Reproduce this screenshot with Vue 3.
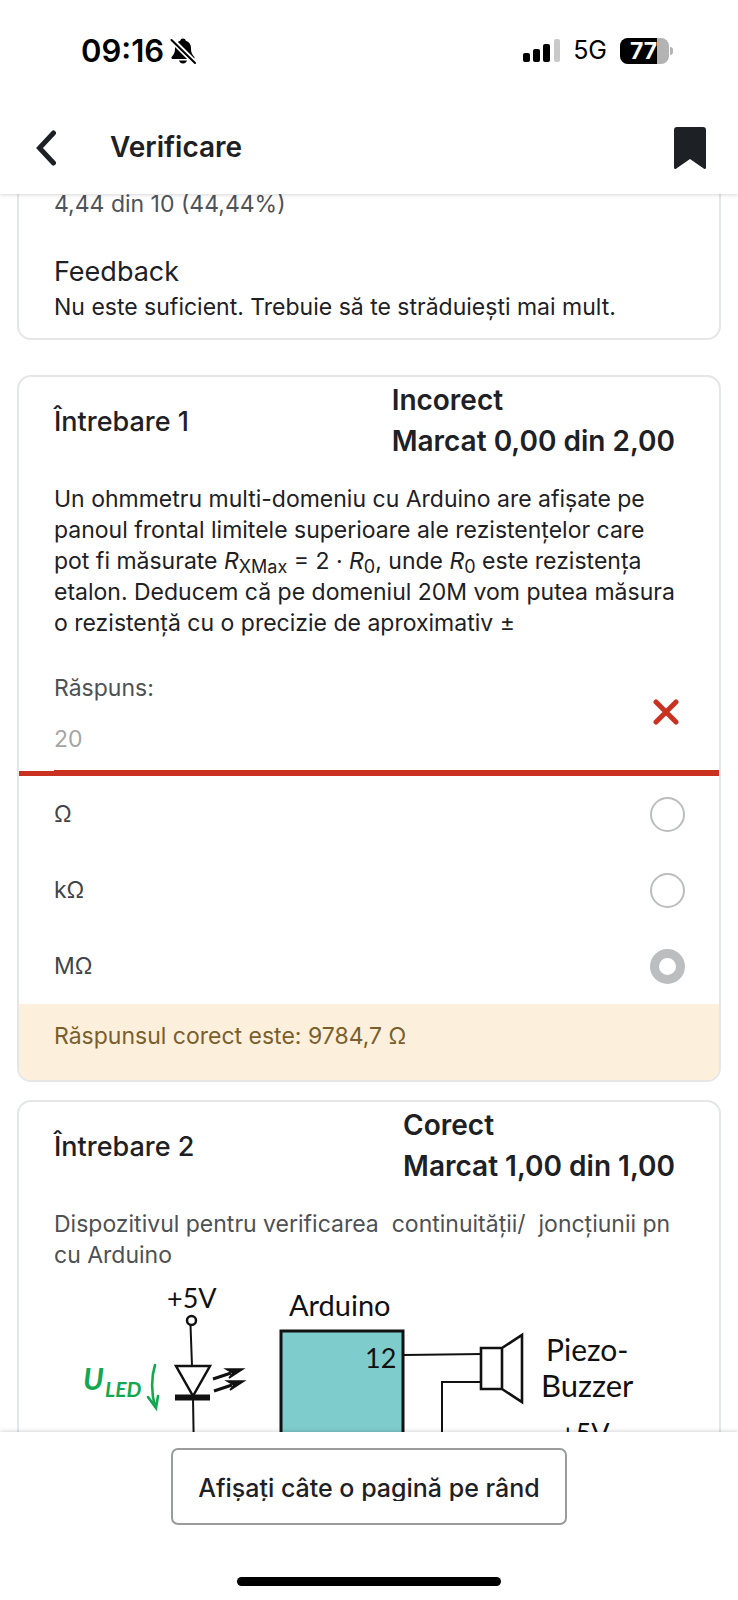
<script setup>
import { ref } from 'vue'

const units = [
  { value: 'ohm', label: 'Ω' },
  { value: 'kohm', label: 'kΩ' },
  { value: 'mohm', label: 'MΩ' },
]
const unit = ref('mohm')
const answer = ref('20')
</script>

<template>
  <div class="screen">
    <header class="top">
      <div class="status-bar">
        <div class="clock">
          <span class="time">09:16</span>
          <svg class="bell" viewBox="0 0 26 28" aria-hidden="true">
            <path d="M13 1.500c1.600 0 2.500.9 2.700 2.200 3.500 1 5.300 3.700 5.300 7.300 0 5 1.200 6.300 3.200 8.800.9 1.200.3 2.200-1 2.200H2.800c-1.300 0-1.900-1-1-2.200C3.800 17.300 5 16 5 11c0-3.600 1.800-6.300 5.300-7.300C10.500 2.400 11.400 1.500 13 1.500Z" />
            <path d="M9 23.500h8c-.6 1.800-2 3-4 3s-3.400-1.200-4-3Z" />
            <path d="M0 1 25 26" stroke="#fff" stroke-width="5.500" />
            <path d="M1.500 3 25 26" stroke="#000" stroke-width="2" stroke-linecap="round" />
          </svg>
        </div>
        <div class="signals">
          <svg class="bars" viewBox="0 0 38 24" aria-hidden="true">
            <rect x="0" y="14" width="7" height="9" rx="2" />
            <rect x="10" y="10" width="7" height="13" rx="2" />
            <rect x="20" y="5" width="7" height="18" rx="2" />
            <rect x="31" y="0" width="6" height="23" rx="2" fill="#c9c9c9" />
          </svg>
          <span class="network">5G</span>
          <span class="battery"><span class="level">77</span></span>
          <span class="battery-tip"></span>
        </div>
      </div>
      <div class="toolbar">
        <button class="icon-button" type="button" aria-label="Înapoi">
          <svg class="back" viewBox="0 0 20 36" aria-hidden="true">
            <path d="M17.500 3 3.500 18l14 15" fill="none" stroke="#1d2125" stroke-width="5" stroke-linecap="round" stroke-linejoin="miter" />
          </svg>
        </button>
        <h1>Verificare</h1>
        <button class="icon-button" type="button" aria-label="Marcaj">
          <svg class="bookmark" viewBox="0 0 32 42" aria-hidden="true">
            <path d="M3 0h26a3 3 0 0 1 3 3v37.500c0 1.300-1 1.900-2 1.200L16 32 2 41.700c-1 .7-2 .1-2-1.200V3a3 3 0 0 1 3-3Z" fill="#1d2125" />
          </svg>
        </button>
      </div>
    </header>

    <main>
      <section class="card summary">
        <p class="muted">4,44 din 10 (44,44%)</p>
        <h2>Feedback</h2>
        <p>Nu este suficient. Trebuie să te străduiești mai mult.</p>
      </section>

      <section class="card">
        <div class="question-head">
          <h2>Întrebare 1</h2>
          <div class="grade">
            <p>Incorect</p>
            <p>Marcat 0,00 din 2,00</p>
          </div>
        </div>
        <p class="inset">
          Un ohmmetru multi-domeniu cu Arduino are afișate pe panoul frontal limitele superioare ale
          rezistențelor care pot fi măsurate <i>R</i><sub>XMax</sub> = 2 · <i>R</i><sub>0</sub>, unde
          <i>R</i><sub>0</sub> este rezistența etalon. Deducem că pe domeniul 20M vom putea măsura o
          rezistență cu o precizie de aproximativ ±
        </p>
        <div class="answer">
          <div class="answer-line">
            <div class="answer-field">
              <label for="answer">Răspuns:</label>
              <input id="answer" v-model="answer" type="text" readonly />
            </div>
            <svg class="cross" viewBox="0 0 26 26" role="img" aria-label="Incorect">
              <path d="m3 3 20 20M23 3 3 23" stroke="#ca3120" stroke-width="5" stroke-linecap="round" />
            </svg>
          </div>
        </div>
        <label v-for="item in units" :key="item.value" class="unit">
          <span>{{ item.label }}</span>
          <input v-model="unit" type="radio" name="unit" :value="item.value" />
        </label>
        <p class="correct">Răspunsul corect este: 9784,7 Ω</p>
      </section>

      <section class="card open">
        <div class="question-head">
          <h2>Întrebare 2</h2>
          <div class="grade">
            <p>Corect</p>
            <p>Marcat 1,00 din 1,00</p>
          </div>
        </div>
        <p class="inset soft">
          Dispozitivul pentru verificarea&nbsp; continuității/&nbsp; joncțiunii pn cu Arduino
        </p>
        <svg class="circuit" viewBox="54 1271 630 300" role="img" aria-label="Schema circuitului">
          <g fill="none" stroke="#111" stroke-width="2">
            <path d="M190.500 1325 192 1366M193 1398l1 60" />
            <path d="m404 1355 78-1M481 1382h-39v80" />
            <circle cx="191.500" cy="1320.500" r="4.500" stroke-width="2.500" />
            <path d="M176 1366h34l-17 30Z" stroke-width="2.500" />
            <path d="M175 1397.500h35" stroke-width="6" />
            <path d="m213 1379 18-6M214 1391l18-6" stroke-width="3" />
            <path d="m226 1369 17 0-14 9 4-5zM227 1381h17l-14 9 4-5z" fill="#111" stroke-width="1.500" />
            <rect x="281" y="1331" width="122" height="180" fill="#7fcccc" stroke-width="3" />
            <path d="M481 1348h21v41h-21zM502 1348l20-13v67l-20-13" stroke-width="2.600" />
          </g>
          <g fill="none" stroke="#12a850" stroke-width="2.600" stroke-linecap="round">
            <path d="M155 1365c-4 13-4 26 0 42M148 1397l8 11 2-12" />
          </g>
          <g class="labels">
            <text x="167" y="1308" font-size="27">+5V</text>
            <text x="289" y="1316" font-size="29">Arduino</text>
            <text x="365" y="1368" font-size="27">12</text>
            <text x="546" y="1361" font-size="30">Piezo-</text>
            <text x="541" y="1397" font-size="31">Buzzer</text>
            <text x="560" y="1443" font-size="27">+5V</text>
            <text class="green" x="83" y="1390" font-size="30">U</text>
            <text class="green" x="105" y="1397" font-size="21">LED</text>
          </g>
        </svg>
      </section>
    </main>

    <footer>
      <button class="page-button" type="button"><span>Afișați câte o pagină pe rând</span></button>
      <span class="home"></span>
    </footer>
  </div>
</template>

<style>
body {
  background: #fff;
}
</style>

<style scoped>
* {
  box-sizing: border-box;
}
.screen {
  display: flex;
  flex-direction: column;
  height: 100vh;
  overflow: hidden;
  font-family: Inter, "Liberation Sans", sans-serif;
  font-size: 23px;
  line-height: 31px;
  color: #1d2125;
}
h1,
h2,
p {
  margin: 0;
}
button {
  font: inherit;
  color: inherit;
  background: none;
  border: 0;
  padding: 0;
}
.top {
  position: relative;
  z-index: 1;
  background: #fff;
  box-shadow: 0 1px 4px rgba(0, 0, 0, 0.16);
}
.status-bar {
  display: flex;
  justify-content: space-between;
  align-items: center;
  height: 101px;
  padding: 0 65px 0 81px;
  color: #000;
}
.clock,
.signals {
  display: flex;
  align-items: center;
}
.clock {
  gap: 6px;
}
.time {
  font-size: 31px;
  font-weight: 600;
}
.bell {
  width: 26px;
  height: 28px;
}
.bars {
  width: 38px;
  height: 24px;
}
.network {
  font-size: 25px;
  margin: 0 13px 0 12px;
}
.battery {
  width: 49px;
  height: 26px;
  border-radius: 8px;
  background: #b3b3b3;
  overflow: hidden;
}
.level {
  display: block;
  width: 76%;
  height: 26px;
  padding-left: 10px;
  background: #000;
  color: #fff;
  font-size: 23px;
  font-weight: 700;
  line-height: 26px;
  overflow: hidden;
}
.battery-tip {
  width: 3px;
  height: 8px;
  margin-left: 1px;
  border-radius: 0 4px 4px 0;
  background: #b3b3b3;
}
.toolbar {
  display: flex;
  align-items: center;
  height: 93px;
  padding: 0 32px 0 36px;
}
.icon-button,
.icon-button svg {
  display: block;
}
.back {
  width: 20px;
  height: 36px;
}
.bookmark {
  width: 32px;
  height: 42px;
}
h1 {
  flex: 1;
  margin-left: 54px;
  font-size: 28px;
  font-weight: 600;
  line-height: 41px;
}
h2 {
  font-size: 27px;
  font-weight: 400;
  line-height: 41px;
}
main {
  flex: 1;
  min-height: 0;
  overflow: hidden;
  padding: 0 17px;
}
.card {
  border: 2px solid #e5e6e7;
  border-radius: 14px;
  margin-bottom: 18px;
  overflow: hidden;
}
.summary {
  margin-top: -5px;
  margin-bottom: 35px;
  padding: 0 35px 15px;
  border-top: 0;
  border-radius: 0 0 14px 14px;
}
.summary h2 {
  margin-top: 31px;
}
.muted {
  color: #4d5359;
}
.question-head {
  display: flex;
  justify-content: space-between;
  align-items: center;
  padding: 3px 44px 22px 35px;
}
.question-head h2 {
  font-weight: 500;
}
.grade {
  font-size: 28px;
  font-weight: 600;
  line-height: 41px;
}
.inset {
  padding: 0 35px;
}
.soft {
  color: #4d5154;
}
sub {
  font-size: 18px;
  line-height: 0;
  vertical-align: -4px;
}
.answer {
  padding: 34px 0 0 35px;
  border-bottom: 5px solid #ca3120;
}
.answer-line {
  display: flex;
  align-items: center;
  padding-right: 40px;
  padding-bottom: 15px;
  border-bottom: 1px solid #ca3120;
}
.answer-field {
  display: flex;
  flex: 1;
  flex-direction: column;
  gap: 20px;
  min-width: 0;
  color: #4d5154;
}
.answer-field input {
  width: 100%;
  height: 31px;
  padding: 0;
  border: 0;
  outline: 0;
  background: none;
  font: inherit;
  color: #a5a5a5;
}
.cross {
  width: 26px;
  height: 26px;
  margin-bottom: 4px;
}
.unit {
  display: flex;
  justify-content: space-between;
  align-items: center;
  height: 76px;
  padding: 0 34px 0 35px;
  color: #414549;
}
.unit input {
  appearance: none;
  width: 35px;
  height: 35px;
  margin: 0;
  border: 2px solid #bcbdbe;
  border-radius: 50%;
}
.unit input:checked {
  border-width: 9px;
}
.correct {
  padding: 17px 35px 28px;
  background: #fcefdc;
  color: #7a5f2c;
}
.open {
  border-bottom: 0;
}
.circuit {
  display: block;
  width: calc(100% - 70px);
  margin-left: 35px;
}
.labels {
  font-family: Lato, sans-serif;
  fill: #111;
}
.labels .green {
  font-style: italic;
  font-weight: 700;
  fill: #12a850;
}
footer {
  position: relative;
  z-index: 1;
  display: flex;
  flex-direction: column;
  align-items: center;
  padding: 16px 0 14px;
  background: #fff;
  box-shadow: 0 -1px 4px rgba(0, 0, 0, 0.16);
}
.page-button {
  height: 77px;
  padding: 0 25px;
  border: 2px solid #9a9b9d;
  border-radius: 7px;
  font-size: 25px;
  font-weight: 500;
}
.page-button span {
  display: block;
  height: 28px;
  overflow: hidden;
}
.home {
  width: 264px;
  height: 9px;
  margin-top: 52px;
  border-radius: 5px;
  background: #000;
}
</style>
